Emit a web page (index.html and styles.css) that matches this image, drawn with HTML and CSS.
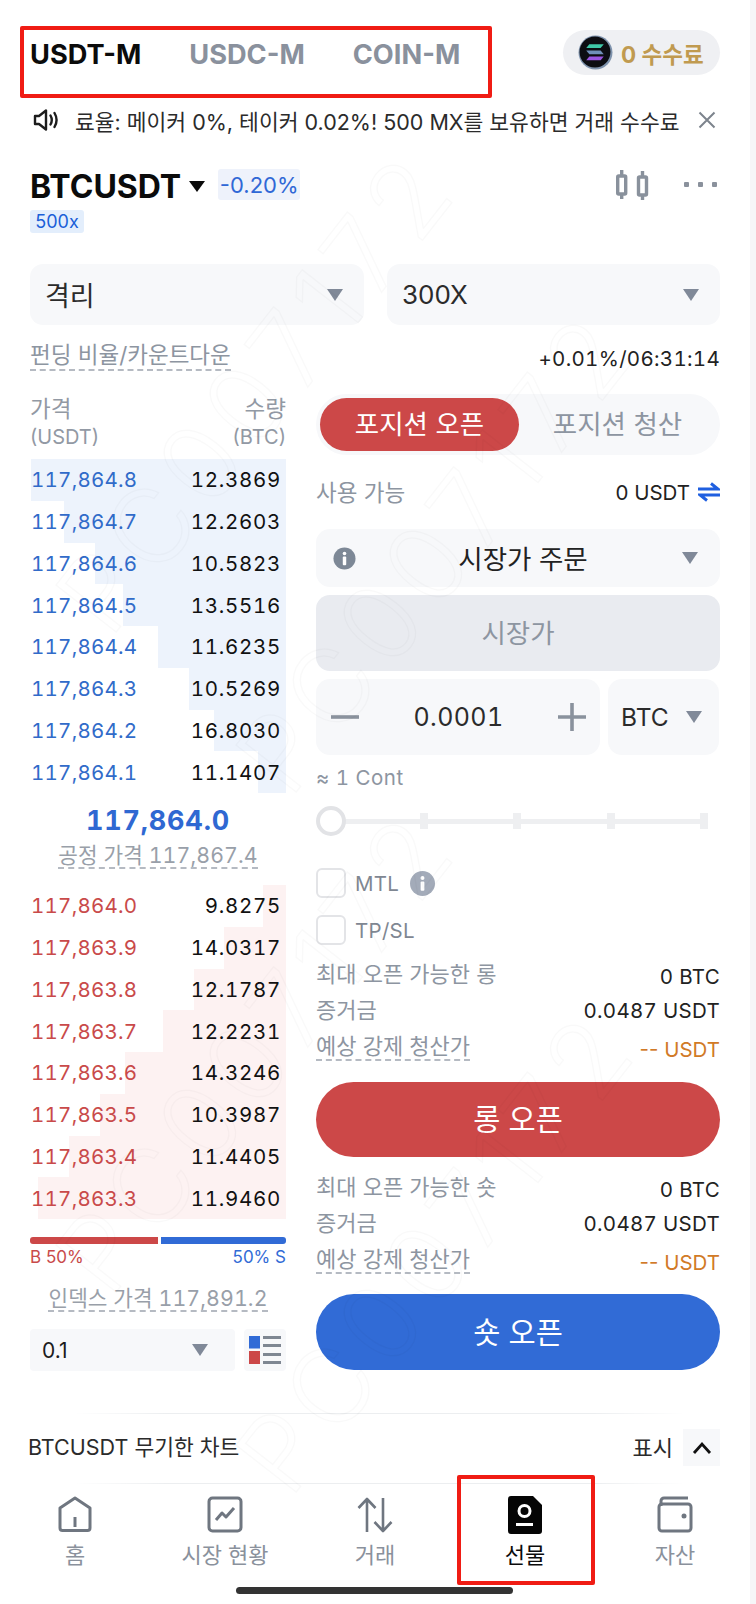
FILE: index.html
```html
<!DOCTYPE html>
<html lang="ko">
<head>
<meta charset="utf-8">
<title>선물</title>
<link rel="stylesheet" href="styles.css">
</head>
<body>
<div class="page">
  <header class="top">
    <nav class="tabs">
      <span class="tab active">USDT-M</span>
      <span class="tab">USDC-M</span>
      <span class="tab">COIN-M</span>
    </nav>
    <div class="fee-pill">
      <svg class="coin" viewBox="0 0 34 34"><circle cx="17" cy="17" r="16.5" fill="#7f93ad"/><circle cx="16.5" cy="16.5" r="15" fill="#0c0d12"/><path d="M11 9h14l-3 3.6H8z" fill="#3fc8a8"/><path d="M8 15h14l3 3.6H11z" fill="#6f8fb8"/><path d="M11 21h14l-3 3.6H8z" fill="#9a55e0"/></svg>
      <span class="fee-text">0 수수료</span>
    </div>
  </header>

  <div class="notice">
    <svg class="speaker" viewBox="0 0 26 24" fill="none" stroke="#1c1c1c" stroke-width="2.4"><path d="M2 8h4l7-5.5v19L6 16H2z" stroke-linejoin="round"/><path d="M17.5 7.5c1.6 2.8 1.6 6.2 0 9M21.5 5c2.6 4.4 2.6 9.6 0 14" stroke-linecap="round"/></svg>
    <span class="notice-text">료율: 메이커 0%, 테이커 0.02%! 500 MX를 보유하면 거래 수수료</span>
    <svg class="close" viewBox="0 0 18 18" fill="none" stroke="#7d848d" stroke-width="2"><path d="M1.5 1.5l15 15M16.5 1.5l-15 15"/></svg>
  </div>

  <section class="ticker">
    <div class="ticker-left">
      <div class="ticker-main">
        <span class="symbol">BTCUSDT</span>
        <i class="caret-black"></i>
        <span class="change">-0.20%</span>
      </div>
      <span class="lev-tag">500x</span>
    </div>
    <div class="ticker-tools">
      <svg class="candles" viewBox="0 0 33 30" fill="none" stroke="#89919c" stroke-width="3.400"><rect x="1.700" y="6" width="8" height="18" rx="1"/><path d="M5.700 0v6M5.700 24v5"/><rect x="22.500" y="7" width="8" height="18" rx="1"/><path d="M26.500 1v6M26.500 25v5"/></svg>
      <div class="dots"><i></i><i></i><i></i></div>
    </div>
  </section>

  <div class="selects">
    <div class="select big"><span class="ko-big">격리</span><i class="caret"></i></div>
    <div class="select big"><span>300X</span><i class="caret"></i></div>
  </div>

  <div class="funding">
    <span class="dashed muted">펀딩 비율/카운트다운</span>
    <span class="funding-val">+0.01%/06:31:14</span>
  </div>

  <div class="columns">
    <section class="book">
      <div class="book-head">
        <div class="book-head-row ko"><span>가격</span><span>수량</span></div>
        <div class="book-head-row"><span>(USDT)</span><span>(BTC)</span></div>
      </div>
      <div class="rows bids">
        <div class="row"><i class="depth" style="width:255px"></i><b>117,864.8</b><span>12.3869</span></div>
        <div class="row"><i class="depth" style="width:222px"></i><b>117,864.7</b><span>12.2603</span></div>
        <div class="row"><i class="depth" style="width:191px"></i><b>117,864.6</b><span>10.5823</span></div>
        <div class="row"><i class="depth" style="width:163px"></i><b>117,864.5</b><span>13.5516</span></div>
        <div class="row"><i class="depth" style="width:128px"></i><b>117,864.4</b><span>11.6235</span></div>
        <div class="row"><i class="depth" style="width:97px"></i><b>117,864.3</b><span>10.5269</span></div>
        <div class="row"><i class="depth" style="width:72px"></i><b>117,864.2</b><span>16.8030</span></div>
        <div class="row"><i class="depth" style="width:28px"></i><b>117,864.1</b><span>11.1407</span></div>
      </div>
      <div class="mid-price">117,864.0</div>
      <div class="ref-line"><span class="dashed muted">공정 가격 117,867.4</span></div>
      <div class="rows asks">
        <div class="row"><i class="depth" style="width:23px"></i><b>117,864.0</b><span>9.8275</span></div>
        <div class="row"><i class="depth" style="width:62px"></i><b>117,863.9</b><span>14.0317</span></div>
        <div class="row"><i class="depth" style="width:92px"></i><b>117,863.8</b><span>12.1787</span></div>
        <div class="row"><i class="depth" style="width:123px"></i><b>117,863.7</b><span>12.2231</span></div>
        <div class="row"><i class="depth" style="width:161px"></i><b>117,863.6</b><span>14.3246</span></div>
        <div class="row"><i class="depth" style="width:186px"></i><b>117,863.5</b><span>10.3987</span></div>
        <div class="row"><i class="depth" style="width:217px"></i><b>117,863.4</b><span>11.4405</span></div>
        <div class="row"><i class="depth" style="width:248px"></i><b>117,863.3</b><span>11.9460</span></div>
      </div>
      <div class="ratio"><i class="ratio-buy"></i><i class="ratio-sell"></i></div>
      <div class="ratio-labels"><span class="buy">B 50%</span><span class="sell">50% S</span></div>
      <div class="ref-line index"><span class="dashed muted">인덱스 가격 117,891.2</span></div>
      <div class="book-foot">
        <div class="select step"><span>0.1</span><i class="caret"></i></div>
        <div class="layout-btn">
          <svg viewBox="0 0 32 28"><rect x="0" y="0" width="11" height="12.500" fill="#316bd6"/><rect x="0" y="15" width="11" height="13" fill="#cc4848"/><path d="M14 1.500h18M14 9.500h18M14 18.500h18M14 26.500h18" stroke="#7f8792" stroke-width="3"/></svg>
        </div>
      </div>
    </section>

    <section class="order">
      <div class="segment">
        <span class="seg on">포지션 오픈</span>
        <span class="seg">포지션 청산</span>
      </div>
      <div class="avail">
        <span class="muted">사용 가능</span>
        <span class="avail-val">0 USDT
          <svg class="swap" viewBox="0 0 22 20" fill="none" stroke="#1f5fe0" stroke-width="3"><path d="M0 7h20L13 1.500M22 13H2l7 5.500"/></svg>
        </span>
      </div>
      <div class="select type">
        <svg class="info" viewBox="0 0 24 24"><circle cx="12" cy="12" r="11.500" fill="#7d8896"/><circle cx="12" cy="6.800" r="1.900" fill="#fff"/><rect x="10.200" y="10" width="3.600" height="9" rx="1" fill="#fff"/></svg>
        <span class="type-text">시장가 주문</span>
        <i class="caret"></i>
      </div>
      <div class="market">시장가</div>
      <div class="qty-row">
        <div class="qty">
          <svg class="qty-ico" viewBox="0 0 28 28"><path d="M0 14h28" stroke="#8a929d" stroke-width="3.600"/></svg>
          <span>0.0001</span>
          <svg class="qty-ico" viewBox="0 0 28 28"><path d="M0 14h28M14 0v28" stroke="#8a929d" stroke-width="3.600"/></svg>
        </div>
        <div class="unit"><span>BTC</span><i class="caret"></i></div>
      </div>
      <div class="cont">≈ 1 Cont</div>
      <div class="slider">
        <i class="knob"></i>
        <div class="track"><i></i><i></i><i></i><i></i></div>
      </div>
      <label class="check first"><i class="box"></i><span>MTL</span>
        <svg class="info small" viewBox="0 0 24 24"><circle cx="12" cy="12" r="12" fill="#a3abb9"/><circle cx="12" cy="6.800" r="1.900" fill="#fff"/><rect x="10.200" y="10" width="3.600" height="9" rx="1" fill="#fff"/></svg>
      </label>
      <label class="check"><i class="box"></i><span>TP/SL</span></label>
      <div class="stats">
        <div class="stat"><span class="muted">최대 오픈 가능한 롱</span><b>0 BTC</b></div>
        <div class="stat"><span class="muted">증거금</span><b class="flat">0.0487 USDT</b></div>
        <div class="stat"><span class="dashed muted tight">예상 강제 청산가</span><b class="warn">-- USDT</b></div>
      </div>
      <button class="cta long">롱 오픈</button>
      <div class="stats second">
        <div class="stat"><span class="muted">최대 오픈 가능한 숏</span><b>0 BTC</b></div>
        <div class="stat"><span class="muted">증거금</span><b class="flat">0.0487 USDT</b></div>
        <div class="stat"><span class="dashed muted tight">예상 강제 청산가</span><b class="warn">-- USDT</b></div>
      </div>
      <button class="cta short">숏 오픈</button>
    </section>
  </div>

  <div class="rule"></div>
  <div class="chart-bar">
    <span>BTCUSDT 무기한 차트</span>
    <div class="chart-toggle">
      <span class="show">표시</span>
      <span class="chev"><svg viewBox="0 0 20 14" fill="none" stroke="#111" stroke-width="2.800"><path d="M2 12l8-9 8 9"/></svg></span>
    </div>
  </div>
  <div class="rule second"></div>

  <nav class="tabbar">
    <div class="nav-item">
      <svg viewBox="0 0 36 38" fill="none" stroke="#6f7680" stroke-width="3" stroke-linejoin="round"><path d="M18 2L33 12v20a2.500 2.500 0 0 1-2.500 2.500h-25A2.500 2.500 0 0 1 3 32V12z"/><path d="M18 21v10"/></svg>
      <span>홈</span>
    </div>
    <div class="nav-item">
      <svg viewBox="0 0 36 38" fill="none" stroke="#6f7680" stroke-width="3" stroke-linejoin="round"><rect x="2" y="2" width="32" height="33" rx="3.500"/><path d="M9 24l6-7 4 4 8-9"/></svg>
      <span>시장 현황</span>
    </div>
    <div class="nav-item">
      <svg viewBox="0 0 36 38" fill="none" stroke="#6f7680" stroke-width="2.600" stroke-linejoin="round"><path d="M10 36V3M1.500 12L10 3l8.500 9"/><path d="M26 2v33M17.500 26l8.500 9 8.500-9"/></svg>
      <span>거래</span>
    </div>
    <div class="nav-item current">
      <svg viewBox="0 0 36 38"><path d="M5 0h21l9 9v26a3 3 0 0 1-3 3H4a3 3 0 0 1-3-3V3a3 3 0 0 1 3-3z" fill="#050505"/><circle cx="17.500" cy="15" r="5.500" fill="none" stroke="#fff" stroke-width="3"/><rect x="9" y="27" width="17" height="3" fill="#fff"/></svg>
      <span>선물</span>
    </div>
    <div class="nav-item">
      <svg viewBox="0 0 36 38" fill="none" stroke="#6f7680" stroke-width="3"><path d="M4 10V5a3 3 0 0 1 3-3h24"/><rect x="2" y="8" width="32" height="27" rx="3"/><circle cx="27" cy="20" r="2.500" fill="#6f7680" stroke="none"/></svg>
      <span>자산</span>
    </div>
  </nav>
  <div class="home-bar"></div>

  <svg class="watermark" viewBox="0 0 750 1604" aria-hidden="true">
    <text x="110" y="640" transform="rotate(-52 110 640)">PC007172</text>
    <text x="290" y="800" transform="rotate(-52 290 800)">PC007172</text>
    <text x="110" y="1300" transform="rotate(-52 110 1300)">PC007172</text>
    <text x="290" y="1500" transform="rotate(-52 290 1500)">PC007172</text>
  </svg>

  <i class="mark mark-tabs"></i>
  <i class="mark mark-nav"></i>
</div>
</body>
</html>
```
FILE: styles.css
```css
* { box-sizing: border-box; margin: 0; padding: 0; }
html, body { background: #f6f6f8; }
body {
  width: 756px;
  height: 1604px;
  overflow: hidden;
  font-family: Inter, "Noto Sans CJK KR", sans-serif;
  color: #1c1c1c;
}
i { display: block; font-style: normal; }
.page {
  position: relative;
  width: 750px;
  height: 1604px;
  padding: 30px 30px 0;
  background: #fff;
  overflow: hidden;
}
.muted { color: #8d95a1; }
.dashed { border-bottom: 2px dashed #b5bac2; }

.top { display: flex; justify-content: space-between; align-items: flex-start; height: 45px; }
.tabs { display: flex; gap: 48px; padding-top: 2px; }
.tab { font-size: 27.200px; font-weight: 700; color: #8a919d; line-height: 45px; }
.tab.active { color: #0b0b0b; }
.fee-pill {
  display: flex; align-items: center; gap: 8px;
  width: 157px; height: 45px; padding-left: 15px;
  border-radius: 23px; background: #eff0f3;
}
.coin { width: 35px; height: 35px; }
.fee-text { font-size: 22.500px; font-weight: 700; color: #c09a50; }

.notice { display: flex; align-items: center; height: 40px; margin-top: 25px; }
.speaker { width: 26px; height: 24px; margin-left: 3px; }
.notice-text { flex: 1; margin-left: 16px; font-size: 21.500px; white-space: nowrap; color: #2b2b2b; }
.close { width: 18px; height: 18px; margin-right: 4px; }

.ticker { display: flex; justify-content: space-between; margin-top: 29px; height: 64px; }
.ticker-left { display: flex; flex-direction: column; align-items: flex-start; gap: 10px; }
.ticker-main { display: flex; align-items: center; height: 31px; }
.symbol { font-size: 32px; font-weight: 700; color: #0b0b0b; padding-top: 4px; }
.caret-black {
  width: 0; height: 0; margin: 4px 13px 0 8px;
  border-left: 8.500px solid transparent; border-right: 8.500px solid transparent;
  border-top: 11px solid #0b0b0b;
}
.change {
  display: flex; align-items: center; justify-content: center;
  width: 82px; height: 31px; border-radius: 3px;
  background: #eef2fb; color: #3068d6; font-size: 22px;
}
.lev-tag {
  display: flex; align-items: center; justify-content: center;
  width: 54px; height: 23px; border-radius: 3px;
  background: #e3eefc; color: #1a5fd8; font-size: 18px;
}
.ticker-tools { display: flex; gap: 35px; height: 31px; align-items: center; }
.candles { width: 33px; height: 30px; }
.dots { display: flex; gap: 9px; margin-right: 3px; }
.dots i { width: 5px; height: 5px; background: #8a919c; border-radius: 1px; }

.select {
  display: flex; align-items: center; justify-content: space-between;
  background: #f7f8fa; border-radius: 13px;
}
.caret {
  width: 0; height: 0;
  border-left: 8.500px solid transparent; border-right: 8.500px solid transparent;
  border-top: 12px solid #808998;
}
.selects { display: grid; grid-template-columns: 334px 333px; gap: 23px; margin-top: 31px; }
.select.big { height: 61px; padding: 0 21px 0 15px; font-size: 26px; color: #2b2b2b; }
.ko-big { font-size: 27px; }

.funding { display: flex; justify-content: space-between; align-items: center; height: 30px; margin-top: 15px; }
.funding .dashed { font-size: 22.500px; line-height: 29px; }
.funding-val { font-size: 20.500px; font-variant-numeric: tabular-nums; letter-spacing: .3px; color: #222; padding-top: 6px; }

.columns { display: grid; grid-template-columns: 256px 404px; gap: 30px; margin-top: 24px; }

.book-head { margin-bottom: 7px; color: #9299a4; font-size: 20px; }
.book-head-row { display: flex; justify-content: space-between; height: 29px; line-height: 29px; }
.book-head-row.ko { font-size: 22.500px; }
.rows { display: flex; flex-direction: column; }
.row {
  position: relative; display: flex; justify-content: space-between; align-items: center;
  height: 41.750px; padding-left: 1px; padding-right: 5px;
  font-size: 20.500px; letter-spacing: .7px; font-variant-numeric: tabular-nums;
}
.row b, .row span { position: relative; font-weight: 400; }
.row span { color: #111; }
.row b { letter-spacing: .25px; }
.depth { position: absolute; right: 0; top: 0; bottom: 0; }
.bids .depth { background: #edf3fc; }
.asks .depth { background: #fdf2f2; }
.bids b { color: #316bc9; }
.asks b { color: #c94a4a; }
.mid-price { margin-top: 11px; height: 34px; line-height: 34px; text-align: center; font-size: 27px; font-weight: 700; letter-spacing: .8px; font-variant-numeric: tabular-nums; color: #2f68d2; }
.ref-line { display: flex; justify-content: center; margin-top: 5px; height: 26px; margin-bottom: 16px; }
.ref-line .dashed { font-size: 21.300px; letter-spacing: .1px; font-variant-numeric: tabular-nums; line-height: 24px; height: 26px; white-space: nowrap; color: #999fa9; }
.ratio { display: flex; gap: 3px; height: 7px; margin-top: 18px; }
.ratio-buy { flex: 127; background: #cc4848; border-radius: 3px 0 0 3px; }
.ratio-sell { flex: 125; background: #316bd6; border-radius: 0 3px 3px 0; }
.ratio-labels { display: flex; justify-content: space-between; height: 20px; margin-top: 3px; font-size: 17px; line-height: 20px; }
.buy { color: #c94a4a; }
.sell { color: #316bd6; }
.ref-line.index { margin-top: 19px; margin-bottom: 17px; }
.book-foot { display: flex; justify-content: space-between; height: 42px; }
.select.step { width: 205px; padding: 0 27px 0 12px; border-radius: 4px; font-size: 21px; }
.layout-btn { display: flex; align-items: center; justify-content: center; width: 42px; background: #f7f8fa; border-radius: 4px; }
.layout-btn svg { width: 32px; height: 28px; }

.segment {
  display: grid; grid-template-columns: 199px 1fr; align-items: center;
  height: 61px; padding: 4px; border-radius: 31px; background: #f7f8fa;
}
.seg { text-align: center; font-size: 26.500px; color: #8d95a1; line-height: 53px; }
.seg.on { background: #cc4848; color: #fff; border-radius: 27px; }
.avail { display: flex; justify-content: space-between; align-items: center; height: 30px; margin-top: 22px; font-size: 22.500px; }
.avail > .muted { padding-bottom: 3px; }
.avail-val { display: flex; align-items: center; gap: 8px; font-size: 20.500px; color: #222; }
.swap { width: 22px; height: 20px; }
.select.type { position: relative; height: 58px; margin-top: 22px; padding: 0 22px 0 17px; border-radius: 14px; }
.info { width: 23px; height: 23px; }
.type-text { font-size: 26.500px; color: #222; margin-left: 8px; padding-bottom: 2px; }
.market {
  height: 76px; margin-top: 8px; padding-bottom: 4px; border-radius: 14px; background: #e9ebf0;
  display: flex; align-items: center; justify-content: center; font-size: 26.500px; color: #8d95a1;
}
.qty-row { display: grid; grid-template-columns: 284px 111px; gap: 8px; margin-top: 8px; height: 76px; }
.qty, .unit { display: flex; align-items: center; justify-content: space-between; background: #f7f8fa; border-radius: 14px; }
.qty { padding: 0 14px 0 15px; font-size: 25px; letter-spacing: .4px; font-variant-numeric: tabular-nums; color: #2b2b2b; }
.qty-ico { width: 28px; height: 28px; }
.unit { padding: 0 17px 0 13px; font-size: 24.500px; color: #2b2b2b; }
.cont { height: 26px; margin-top: 10px; line-height: 26px; font-size: 20.500px; letter-spacing: .5px; font-variant-numeric: tabular-nums; color: #8d95a1; }
.slider { position: relative; display: flex; align-items: center; height: 30px; margin-top: 15px; }
.knob { position: absolute; left: 0; width: 30px; height: 30px; border: 4px solid #e2e3e6; border-radius: 50%; background: #fff; z-index: 1; }
.track { position: relative; display: flex; justify-content: space-between; width: 377px; margin-left: 15px; padding-left: 89px; height: 5px; background: #eeeff1; }
.track i { position: relative; top: -6px; width: 8px; height: 16px; background: #eeeff1; }
.check { display: flex; align-items: center; height: 30px; margin-top: 17px; font-size: 20.500px; letter-spacing: .3px; color: #7f8792; }
.check.first { margin-top: 32px; }
.box { width: 30px; height: 30px; margin-right: 9px; border: 2.500px solid #e3e4e7; border-radius: 6px; }
.info.small { width: 25px; height: 25px; margin-left: 11px; }
.stats { margin-top: 11px; }
.stat { display: flex; justify-content: space-between; align-items: flex-start; height: 36px; font-size: 22px; line-height: 36px; }
.stat .tight { line-height: 36px; height: 33px; }
.stat b { font-weight: 400; font-size: 20.500px; letter-spacing: .3px; font-variant-numeric: tabular-nums; color: #222; padding-top: 3px; }
.stat b.flat { padding-top: 1px; }
.stat b.warn { color: #d17a27; padding-top: 4px; font-variant-numeric: normal; letter-spacing: 0; font-size: 20.500px; }
.cta { display: block; width: 100%; border: 0; padding-bottom: 5px; color: #fff; font: inherit; font-size: 29.500px; border-radius: 38px; }
.cta.long { height: 75px; margin-top: 18px; background: #cc4848; }
.cta.short { height: 76px; margin-top: 17px; background: #316bd6; }
.stats.second { margin-top: 12px; }

.rule { width: 610px; height: 1px; margin: 42px 0 0 45px; background: linear-gradient(90deg, #fff, #eceef0 15%, #eceef0 85%, #fff); }
.rule.second { margin-top: 17px; }
.chart-bar { display: flex; justify-content: space-between; align-items: center; height: 37px; margin-top: 15px; font-size: 21.500px; color: #2b2b2b; margin-left: -2px; }
.chart-bar > span, .show { padding-bottom: 4px; }
.chart-toggle { display: flex; align-items: center; gap: 10px; font-size: 22px; }
.chev { display: flex; align-items: center; justify-content: center; width: 37px; height: 37px; background: #f7f8fa; }
.chev svg { width: 20px; height: 14px; }

.tabbar { display: grid; grid-template-columns: repeat(5, 150px); margin: 12px -30px 0; }
.nav-item { display: flex; flex-direction: column; align-items: center; font-size: 22px; color: #8a919c; }
.nav-item svg { width: 36px; height: 38px; }
.nav-item span { margin-top: 5px; line-height: 32px; }
.nav-item.current { color: #0b0b0b; }
.home-bar { width: 277px; height: 7px; margin: 16px 0 0 206px; background: #333; border-radius: 4px; }

.watermark { position: absolute; left: 0; top: 0; width: 750px; height: 1604px; pointer-events: none; }
.watermark text { font-size: 105px; font-weight: 300; letter-spacing: 10px; fill: none; stroke: #000; stroke-opacity: .022; stroke-width: 1.500px; }
.mark { position: absolute; border: 4px solid #f01c14; border-radius: 2px; }
.mark-tabs { left: 20px; top: 26px; width: 472px; height: 72px; }
.mark-nav { left: 457px; top: 1475px; width: 138px; height: 110px; }
```
